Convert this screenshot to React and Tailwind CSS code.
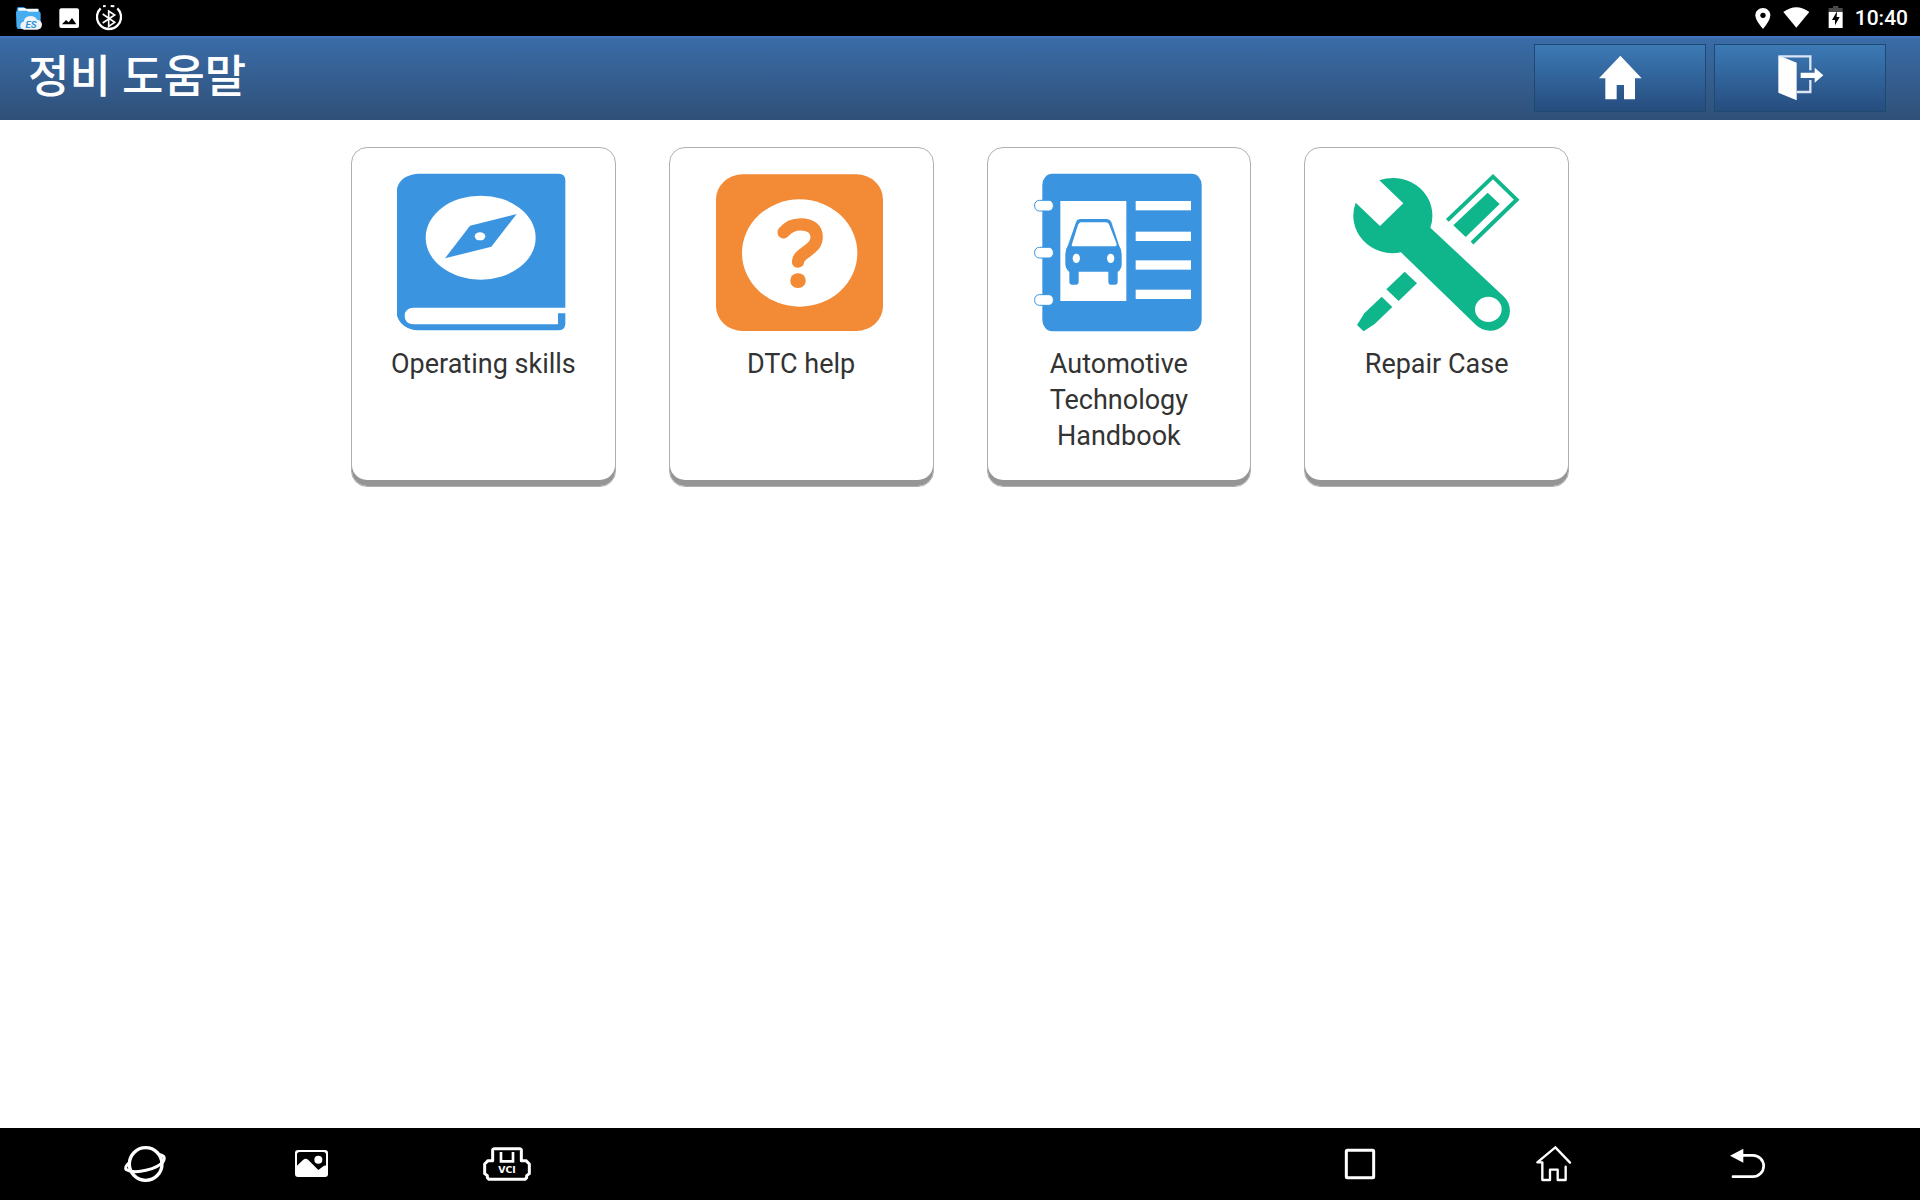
const BLUE = "#3a94e0";
const ORANGE = "#f28a36";
const GREEN = "#0fb68b";

function CompassBook() {
    return (
        <svg viewBox="160 99 540 480" className="h-40 w-[180px]" aria-hidden="true">
            <path
                fill={BLUE}
                d="M235 101H657Q677 102 677 120V503H220Q195 505 195 528Q195 551 220 553H655V520H677V552Q676 571 655 571H235Q185 567 172 527V145Q183 105 235 101Z"
            />
            <ellipse cx="423" cy="293" rx="165" ry="126" fill="#fff" />
            <path fill={BLUE} d="M531 222L455 320L316 355L391 257Z" />
            <ellipse cx="421" cy="289" rx="16" ry="12" fill="#fff" />
        </svg>
    );
}

function QuestionTile() {
    return (
        <svg viewBox="153 99 540 480" className="h-40 w-[180px]" aria-hidden="true">
            <rect x="168" y="103" width="501" height="470" rx="80" ry="75" fill={ORANGE} />
            <ellipse cx="419" cy="339" rx="173" ry="161" fill="#fff" />
            <path
                fill="none"
                stroke={ORANGE}
                strokeWidth="37"
                strokeLinecap="round"
                d="M371 277C384 260 400 253 422 253C454 253 470 268 470 291C470 311 458 321 443 332C423 346 415 353 414 365"
            />
            <rect x="391" y="400" width="46" height="44" rx="22" ry="20" fill={ORANGE} />
        </svg>
    );
}

function CarHandbook() {
    return (
        <svg viewBox="146 99 540 480" className="h-40 w-[180px]" aria-hidden="true">
            <rect x="186" y="101" width="478" height="473" rx="30" ry="34" fill={BLUE} />
            <path fill="#fff" d="M240 183H438V483H240Z" />
            {[183, 275, 361, 449].map((y) => (
                <rect key={y} x="466" y={y} width="166" height="28" fill="#fff" />
            ))}
            {[181, 322, 464].map((y) => (
                <rect key={y} x="163" y={y} width="56" height="32" rx="14" fill="#fff" stroke={BLUE} strokeWidth="3" />
            ))}
            <path
                fill={BLUE}
                d="M263 316L287 247Q290 237 301 237H378Q388 237 393 246L416 316Q424 328 424 342V374Q424 386 412 396V427Q412 434 405 434H391Q384 434 384 427V395H295V427Q295 434 288 434H274Q267 434 267 427V396Q255 386 255 372V342Q255 328 263 316Z"
            />
            <path fill="#fff" d="M301 247H378Q384 247 387 255L409 312Q410 319 404 319H279Q272 319 275 312L293 255Q296 247 301 247Z" />
            <ellipse cx="288" cy="355" rx="11" ry="14" fill="#fff" />
            <ellipse cx="391" cy="355" rx="11" ry="14" fill="#fff" />
        </svg>
    );
}

function RepairTools() {
    return (
        <svg viewBox="155 99 540 480" className="h-40 w-[180px]" aria-hidden="true">
            <g fill={GREEN}>
                <path d="M252 121A118 113 0 0 1 405 263L626 470A59 59 0 0 1 542 555L317 337A118 113 0 0 1 181 188L254 258L324 190Z" />
                <path d="M577 158L613 192L511 291L474 256Z" />
                <path d="M328 395L365 430L310 483L273 448Z" />
                <path d="M259 470L291 501L238 552L205 574L185 555L207 520Z" />
            </g>
            <ellipse cx="579" cy="508" rx="40" ry="38" fill="#fff" />
            <path fill="none" stroke={GREEN} strokeWidth="12" d="M456 241L593 110L664 179L530 309" />
        </svg>
    );
}

const CARDS = [
    { label: "Operating skills", Icon: CompassBook },
    { label: "DTC help", Icon: QuestionTile },
    { label: "Automotive Technology Handbook", Icon: CarHandbook },
    { label: "Repair Case", Icon: RepairTools },
];

function HelpCard({ label, Icon }) {
    return (
        <button
            type="button"
            className="flex flex-col items-center gap-[13px] rounded-2xl border border-[#b0b0b0] bg-white px-6 pt-[25px] pb-8 shadow-[inset_0_-6px_0_#959595]"
        >
            <Icon />
            <span className="text-center text-[27px] leading-9 text-[#333333]">{label}</span>
        </button>
    );
}

function StatusBar() {
    return (
        <div className="flex h-9 items-center justify-between bg-black pr-3 pl-4 text-white">
            <div className="flex items-center gap-[17px]">
                <svg viewBox="48 15 78 78" className="size-[26px]" aria-hidden="true">
                    <path fill="#2b93dc" d="M50 28Q50 21 56 21H72L78 27H112Q118 27 118 33V80H50Z" />
                    <path fill="#f4f9fd" d="M55 24H74L79 26H115V36H55Z" />
                    <path fill="#45adf0" d="M48 38Q48 32 54 32H80L85 35H117Q122 35 122 41V80Q122 87 116 87H56Q50 87 50 80Z" />
                    <path fill="#f1f3f5" d="M72 89Q60 87 61 76Q63 66 71 65Q74 49 91 48Q106 48 111 59Q126 61 126 75Q124 89 111 89Z" />
                    <text x="93" y="84" textAnchor="middle" fontSize="29" fontStyle="italic" fontWeight="700" fill="#2b93dc">
                        ES
                    </text>
                </svg>
                <svg viewBox="177 24 60 60" className="size-5" aria-hidden="true">
                    <rect x="178" y="25" width="59" height="59" rx="6" fill="#fff" />
                    <path fill="#000" d="M186 73L198 60L206 67L216 54L229 73Z" />
                </svg>
                <svg viewBox="288 15 78 78" className="size-[26px]" fill="none" stroke="#fff" aria-hidden="true">
                    <path strokeWidth="7" d="M302 25A36 36 0 1 0 352 25" />
                    <path strokeWidth="6" d="M309 19L317 18M332 18L343 19" />
                    <path strokeWidth="5" d="M308 42L344 67L326 79V33L344 45L308 69" />
                </svg>
            </div>
            <div className="flex items-center gap-3">
                <svg viewBox="767 18 48 72" className="h-6 w-4" aria-hidden="true">
                    <path fill="#fff" d="M791 24C778 24 768 34 768 46C768 62 791 87 791 87C791 87 813 62 813 46C813 34 803 24 791 24Z" />
                    <circle cx="791" cy="46" r="8" fill="#000" />
                </svg>
                <svg viewBox="852 18 84 72" className="h-6 w-7" aria-hidden="true">
                    <path fill="#fff" d="M853 36Q892 7 931 36L892 83Z" />
                </svg>
                <svg viewBox="970 18 60 72" className="h-6 w-5" aria-hidden="true">
                    <path fill="#4a4a4a" d="M1000 18H1016V24H1029V36H987V24H1000Z" />
                    <path fill="#fff" d="M987 36H1029V84H987Z" />
                    <path fill="#000" d="M1012 34L997 60H1006V76L1020 51H1011Z" />
                </svg>
                <span className="text-[21px] leading-6 font-medium">10:40</span>
            </div>
        </div>
    );
}

function HeaderButton({ label, children }) {
    return (
        <button
            type="button"
            aria-label={label}
            className="flex h-[68px] w-[172px] items-center justify-center border border-[#1c4a70] bg-linear-to-b from-[#3c7ab6] to-[#264d7e]"
        >
            {children}
        </button>
    );
}

function Header() {
    return (
        <header className="flex h-[84px] items-center justify-between bg-linear-to-b from-[#3a6da9] to-[#2f5078] pr-[34px] pl-7 shadow-[inset_0_2px_0_#4474bd]">
            <h1 className="text-[45px] leading-[68px] font-medium text-white">정비 도움말</h1>
            <div className="flex gap-2">
                <HeaderButton label="Home">
                    <svg viewBox="288 162 144 144" className="size-12" aria-hidden="true">
                        <path fill="#fff" d="M361 167L425 235H405V298H372V255H350V298H316V235H297Z" />
                    </svg>
                </HeaderButton>
                <HeaderButton label="Exit">
                    <svg viewBox="828 162 144 144" className="size-12" aria-hidden="true">
                        <path fill="#fff" d="M835 166L890 188V301L835 278Z" />
                        <path fill="none" stroke="#dbe6f2" strokeWidth="7" d="M838 169H931V211M890 276H931V240" />
                        <path fill="#fff" d="M902 218H944V203L970 226L944 248V234H902Z" />
                    </svg>
                </HeaderButton>
            </div>
        </header>
    );
}

function NavButton({ label, viewBox, className = "", children }) {
    return (
        <button type="button" aria-label={label} className={className}>
            <svg viewBox={viewBox} className="size-12" fill="none" stroke="#fff" aria-hidden="true">
                {children}
            </svg>
        </button>
    );
}

function NavBar() {
    return (
        <nav className="flex h-[72px] items-center justify-between bg-black pr-[148px] pl-[121px]">
            <div className="flex gap-[119px]">
                <NavButton label="Browser" viewBox="63 60 144 144">
                    <circle cx="137" cy="132" r="49" strokeWidth="10" />
                    <path strokeWidth="9" d="M88 128Q72 142 79 149Q100 160 138 151Q178 141 190 124Q199 106 178 104" />
                </NavButton>
                <NavButton label="Screenshot" viewBox="564 60 144 144">
                    <rect x="585" y="90" width="99" height="81" rx="9" fill="#fff" stroke="none" />
                    <path fill="#000" stroke="none" d="M591 104Q591 96 599 96H670Q678 96 678 104V137Q673 136 668 140L655 150L625 120Q617 113 609 120L591 137Z" />
                    <circle cx="655" cy="119" r="12" fill="#fff" stroke="none" />
                </NavButton>
                <NavButton label="VCI" viewBox="1149 60 144 144" className="ml-7">
                    <path strokeWidth="9" strokeLinejoin="round" d="M1178 89L1182 86H1260L1264 89V122H1278L1288 132V161L1280 167V173L1275 178H1167L1162 173V167L1154 161V132L1164 122H1178Z" />
                    <path strokeWidth="8" d="M1203 96V124H1239V96" />
                    <text x="1221" y="159" textAnchor="middle" className="font-['DejaVu_Sans',sans-serif]" fontSize="28" fontWeight="700" fill="#fff" stroke="none">
                        VCI
                    </text>
                </NavButton>
            </div>
            <div className="flex gap-[146px]">
                <NavButton label="Recent apps" viewBox="48 60 144 144">
                    <rect x="79" y="91" width="82" height="82" rx="3" strokeWidth="9" />
                </NavButton>
                <NavButton label="Home screen" viewBox="630 60 144 144">
                    <path strokeWidth="7" strokeLinecap="round" strokeLinejoin="round" d="M750 128L706 82L652 127H667V180H690V149H713V180H737V140" />
                </NavButton>
                <NavButton label="Back" viewBox="1212 60 144 144">
                    <path fill="#fff" stroke="none" d="M1230 107L1270 86V128Z" />
                    <path strokeWidth="8" strokeLinecap="round" d="M1268 106H1299A32 32 0 0 1 1299 170H1239" />
                </NavButton>
            </div>
        </nav>
    );
}

export default function App() {
    return (
        <div className="flex min-h-screen flex-col bg-white font-[Roboto,'Noto_Sans_CJK_KR',sans-serif]">
            <StatusBar />
            <Header />
            <main className="flex-1 px-8 pt-[27px]">
                <div className="mx-auto grid max-w-[1218px] grid-cols-4 gap-[53px]">
                    {CARDS.map((card) => (
                        <HelpCard key={card.label} {...card} />
                    ))}
                </div>
            </main>
            <NavBar />
        </div>
    );
}
